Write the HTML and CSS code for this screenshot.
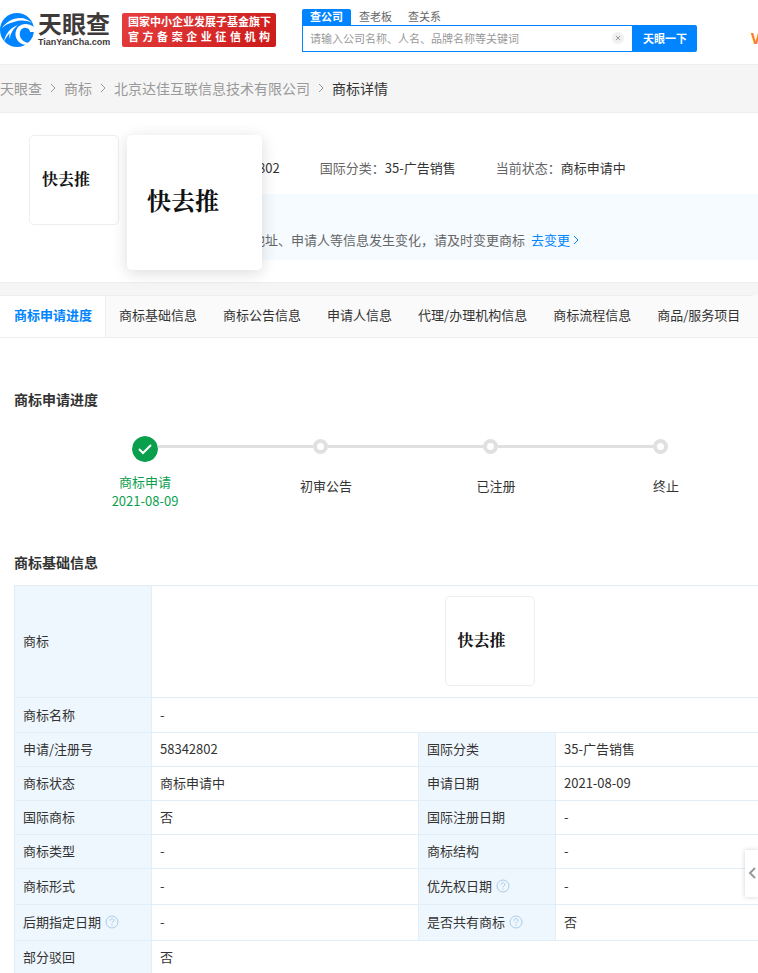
FILE: index.html
```html
<!DOCTYPE html>
<html lang="zh-CN">
<head>
    <meta charset="UTF-8">
    <meta name="viewport" content="width=device-width, initial-scale=1.0">
    <title>商标详情 - 天眼查</title>
    <link rel="stylesheet" href="styles.css">
</head>
<body>

<header class="header">
    <a class="logo" href="#">
        <svg class="logo-mark" viewBox="0 0 34 34" aria-hidden="true">
            <circle cx="17" cy="17" r="17" fill="#0084ff"/>
            <path d="M2 15C6 9 13 5 20 5c5 0 9 2 12 5-6-3-12-3-18-1C9 10 5 12 2 15z" fill="#fff"/>
            <path d="M34 14c-5-4-12-4-16 0-4 5-3 11 1 15 2 2 5 3 8 3l3-2c-5 0-9-3-10-7-1-5 2-9 6-8 2 0 4 2 4 4l4 0z" fill="#fff"/>
            <path d="M4 29C5 21 10 15 18 12c-5 4-8 9-8 14-1-2-1-4 0-6-3 3-5 6-6 9z" fill="#fff"/>
        </svg>
        <span class="logo-text">
            <span class="logo-name">天眼查</span>
            <span class="logo-domain">TianYanCha.com</span>
        </span>
    </a>
    <div class="badge">
        <div>国家中小企业发展子基金旗下</div>
        <div>官方备案企业征信机构</div>
    </div>
    <form class="search">
        <div class="search-tabs">
            <a class="active" href="#">查公司</a>
            <a href="#">查老板</a>
            <a href="#">查关系</a>
        </div>
        <div class="search-row">
            <div class="search-box">
                <input type="text" aria-label="搜索" placeholder="请输入公司名称、人名、品牌名称等关键词">
                <button class="clear" type="button" aria-label="清空">
                    <svg viewBox="0 0 12 12"><circle cx="6" cy="6" r="6" fill="#f0f0f0"/><path d="M4 4l4 4M8 4l-4 4" stroke="#999"/></svg>
                </button>
            </div>
            <button class="search-btn" type="button">天眼一下</button>
        </div>
    </form>
    <a class="vip" href="#">VIP</a>
</header>

<nav class="breadcrumb">
    <a href="#">天眼查</a>
    <svg viewBox="0 0 6 10"><path d="M1 1l4 4-4 4"/></svg>
    <a href="#">商标</a>
    <svg viewBox="0 0 6 10"><path d="M1 1l4 4-4 4"/></svg>
    <a href="#">北京达佳互联信息技术有限公司</a>
    <svg viewBox="0 0 6 10"><path d="M1 1l4 4-4 4"/></svg>
    <span class="current">商标详情</span>
</nav>

<section class="summary">
    <div class="mark">快去推</div>
    <div class="mark-preview">快去推</div>
    <div class="summary-main">
        <div class="facts">
            <div>申请号：<b>58342802</b></div>
            <div>国际分类：<b>35-广告销售</b></div>
            <div>当前状态：<b>商标申请中</b></div>
        </div>
        <div class="notice">
            <span>若企业名称、地址、申请人等信息发生变化，请及时变更商标</span>
            <a href="#">去变更<svg viewBox="0 0 6 10"><path d="M1 1l4 4-4 4"/></svg></a>
        </div>
    </div>
</section>

<nav class="tabs">
    <a class="active" href="#progress">商标申请进度</a>
    <a href="#basic">商标基础信息</a>
    <a href="#">商标公告信息</a>
    <a href="#">申请人信息</a>
    <a href="#">代理/办理机构信息</a>
    <a href="#">商标流程信息</a>
    <a href="#">商品/服务项目</a>
</nav>

<main class="content">
    <h2 id="progress">商标申请进度</h2>
    <ol class="steps">
        <li class="done">
            <div class="track">
                <svg class="dot" viewBox="0 0 26 26"><circle cx="13" cy="13" r="13" fill="#0a9f4d"/><path d="M7 13l4 4 8-8" fill="none" stroke="#fff" stroke-width="2"/></svg>
                <span class="line"></span>
            </div>
            <div class="label">商标申请<br>2021-08-09</div>
        </li>
        <li>
            <div class="track"><span class="dot"></span><span class="line"></span></div>
            <div class="label">初审公告</div>
        </li>
        <li>
            <div class="track"><span class="dot"></span><span class="line"></span></div>
            <div class="label">已注册</div>
        </li>
        <li>
            <div class="track"><span class="dot"></span></div>
            <div class="label">终止</div>
        </li>
    </ol>

    <h2 id="basic">商标基础信息</h2>
    <table class="info">
        <colgroup>
            <col class="col-name"><col class="col-value"><col class="col-name"><col>
        </colgroup>
        <tbody>
            <tr class="row-mark">
                <th>商标</th>
                <td colspan="3"><div class="mark">快去推</div></td>
            </tr>
            <tr class="row-name">
                <th>商标名称</th>
                <td colspan="3">-</td>
            </tr>
            <tr>
                <th>申请/注册号</th>
                <td>58342802</td>
                <th>国际分类</th>
                <td>35-广告销售</td>
            </tr>
            <tr>
                <th>商标状态</th>
                <td>商标申请中</td>
                <th>申请日期</th>
                <td>2021-08-09</td>
            </tr>
            <tr>
                <th>国际商标</th>
                <td>否</td>
                <th>国际注册日期</th>
                <td>-</td>
            </tr>
            <tr>
                <th>商标类型</th>
                <td>-</td>
                <th>商标结构</th>
                <td>-</td>
            </tr>
            <tr class="row-tall">
                <th>商标形式</th>
                <td>-</td>
                <th>优先权日期<svg class="help" viewBox="0 0 14 14"><circle cx="7" cy="7" r="6"/><path d="M5 5.8C5 3 9 3 9 5.4 9 7 7 6.8 7 8.4M7 9.6v1.2"/></svg></th>
                <td>-</td>
            </tr>
            <tr class="row-tall">
                <th>后期指定日期<svg class="help" viewBox="0 0 14 14"><circle cx="7" cy="7" r="6"/><path d="M5 5.8C5 3 9 3 9 5.4 9 7 7 6.8 7 8.4M7 9.6v1.2"/></svg></th>
                <td>-</td>
                <th>是否共有商标<svg class="help" viewBox="0 0 14 14"><circle cx="7" cy="7" r="6"/><path d="M5 5.8C5 3 9 3 9 5.4 9 7 7 6.8 7 8.4M7 9.6v1.2"/></svg></th>
                <td>否</td>
            </tr>
            <tr>
                <th>部分驳回</th>
                <td colspan="3">否</td>
            </tr>
        </tbody>
    </table>
</main>

<button class="drawer" type="button" aria-label="展开侧栏">
    <svg viewBox="0 0 8 12"><path d="M7 1L2 6l5 5"/></svg>
</button>

</body>
</html>
```
FILE: styles.css
```css
* { box-sizing: border-box; }
body { margin: 0; font-family: "Microsoft YaHei", "Noto Sans CJK SC", sans-serif; font-size: 13px; line-height: 20px; color: #333; background: #fff; overflow-x: hidden; }
a { color: inherit; text-decoration: none; }
button { padding: 0; border: none; font-family: inherit; cursor: pointer; }

.header { display: flex; align-items: flex-start; height: 65px; padding-top: 9px; border-bottom: 1px solid #eee; white-space: nowrap; overflow: hidden; }
.logo { display: flex; flex: none; width: 122px; gap: 4px; padding-top: 4px; }
.logo-mark { width: 34px; height: 34px; }
.logo-text { display: flex; flex-direction: column; gap: 4px; color: #3e3a39; }
.logo-name { font-size: 24px; line-height: 20px; font-weight: bold; }
.logo-domain { font: bold 9px/10px "Liberation Sans", sans-serif; }
.badge { flex: none; width: 154px; height: 34px; margin: 4px 26px 0 0; padding: 1px 6px; border-radius: 2px; background: linear-gradient(135deg, #e63e3e, #cb1a1a); color: #fff; font-size: 11px; line-height: 15px; font-weight: bold; text-align-last: justify; }
.search { flex: none; width: 395px; margin-right: 54px; font-size: 11px; }
.search-tabs { display: flex; height: 16px; line-height: 15px; color: #666; }
.search-tabs a { padding: 0 8px; }
.search-tabs .active { background: #0084ff; color: #fff; font-weight: bold; border-radius: 2px 2px 0 0; }
.search-row { display: flex; height: 27px; }
.search-box { display: flex; flex: 1; align-items: center; padding: 0 8px 2px 7px; border: 1px solid #0084ff; }
.search-box input { flex: 1; min-width: 0; padding: 0; border: none; outline: none; font-family: inherit; font-size: 11px; }
.search-box input::placeholder { color: #999; }
.clear { display: flex; width: 12px; height: 12px; background: none; }
.search-btn { width: 64px; padding-bottom: 2px; background: #0084ff; color: #fff; font-size: 11px; font-weight: bold; border-radius: 0 2px 2px 0; }
.vip { padding-top: 19px; color: #ff7a1a; font-size: 15px; font-weight: bold; }

.breadcrumb { display: flex; align-items: center; gap: 8px; height: 48px; padding-bottom: 2px; background: #f5f5f5; border-bottom: 1px solid #eee; color: #999; font-size: 14px; }
.breadcrumb svg { width: 6px; height: 10px; fill: none; stroke: #999; }
.breadcrumb .current { color: #333; }

.summary { position: relative; display: flex; gap: 23px; height: 170px; padding: 22px 0 0 29px; border-bottom: 1px solid #eee; }
.mark { display: flex; flex: none; align-items: center; width: 90px; height: 90px; padding: 0 0 4px 12px; border: 1px solid #eee; border-radius: 5px; color: #111; font: bold 16px "Noto Serif CJK SC", "Noto Sans CJK SC", serif; }
.mark-preview { position: absolute; z-index: 2; top: 22px; left: 127px; display: flex; align-items: center; width: 135px; height: 135px; padding: 0 0 6px 20px; border-radius: 5px; background: #fff; box-shadow: 0 3px 16px rgba(0,0,0,0.14); color: #111; font: bold 24px "Noto Serif CJK SC", "Noto Sans CJK SC", serif; }
.summary-main { flex: 1; min-width: 0; padding-top: 23px; white-space: nowrap; }
.facts { display: flex; gap: 40px; padding-left: 28px; color: #666; }
.facts b { color: #333; font-weight: normal; }
.notice { display: flex; gap: 6px; height: 66px; margin-top: 16px; padding: 36px 0 0 32px; background: #f5fbff; color: #666; }
.notice a { color: #0084ff; }
.notice svg { width: 6px; height: 10px; margin-left: 3px; fill: none; stroke: #0084ff; }

.tabs { display: flex; height: 55px; border-top: 12px solid #f5f5f5; border-bottom: 1px solid #eee; background: #fafafa; line-height: 37px; white-space: nowrap; overflow: hidden; }
.tabs a { flex: none; padding: 0 13px; border-top: 1px solid #eee; }
.tabs .active { padding: 0 13px 0 14px; background: #fff; color: #0084ff; font-weight: bold; border-right: 1px solid #eee; }

.content { padding-left: 14px; overflow: hidden; }
h2 { margin: 0; font-size: 14px; line-height: 20px; font-weight: bold; }
#progress { padding-top: 51px; }
.steps { display: flex; margin: 0 0 42px; padding: 27px 0 0 118px; list-style: none; }
.steps li { flex: none; width: 170px; }
.steps .done { width: 181px; color: #0a9f4d; }
.track { display: flex; height: 26px; }
.dot { flex: none; width: 15px; height: 15px; margin-top: 3px; border: 4px solid #e0e0e0; border-radius: 50%; }
.done .dot { width: 26px; height: 26px; margin-top: 0; border: none; }
.line { flex: 1; height: 3px; margin-top: 9px; background: #e0e0e0; }
.label { width: 82px; margin: 14px 0 0 -28px; line-height: 19px; text-align: center; }
.done .label { margin-top: 10px; }

.info { width: 100%; min-width: 814px; margin-top: 13px; border-collapse: collapse; table-layout: fixed; }
.info th, .info td { height: 34px; padding: 0 8px 1px; border: 1px solid #e1edf7; text-align: left; font-weight: normal; }
.info th { background: #eff7fe; }
.info .row-mark td { height: 112px; }
.info .row-name td { height: 35px; }
.info .row-tall td { height: 36px; }
.info .mark { margin: 0 auto; }
.col-name { width: 137px; }
.col-value { width: 267px; }
.help { width: 14px; height: 14px; margin-left: 4px; vertical-align: -2px; fill: none; stroke: #a9cbe8; }

.drawer { position: fixed; right: 0; top: 850px; width: 13px; height: 47px; background: #fff; box-shadow: 0 0 5px rgba(0,0,0,0.18); }
.drawer svg { width: 8px; height: 12px; fill: none; stroke: #999; stroke-width: 2; }
```
